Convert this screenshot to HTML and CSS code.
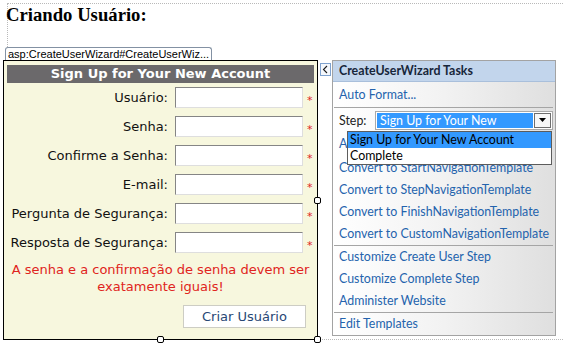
FILE: index.html
```html
<!DOCTYPE html>
<html>
  <head>
    <meta charset="UTF-8">
    <title>Criando Usuário</title>
    <link rel="stylesheet" href="styles.css">
  </head>
  <body>
    <div class="page-head">
      <h3>Criando Usuário:</h3>
    </div>
    <div class="tag-row">
      <span class="tag">asp:CreateUserWizard#CreateUserWiz...</span>
    </div>
    <div class="design">
      <div class="wizard">
        <div class="wz-title">Sign Up for Your New Account</div>
        <div class="field">
          <label for="user">Usuário:</label>
          <input type="text" id="user">
          <span class="req">*</span>
        </div>
        <div class="field">
          <label for="pass">Senha:</label>
          <input type="text" id="pass">
          <span class="req">*</span>
        </div>
        <div class="field">
          <label for="pass2">Confirme a Senha:</label>
          <input type="text" id="pass2">
          <span class="req">*</span>
        </div>
        <div class="field">
          <label for="email">E-mail:</label>
          <input type="text" id="email">
          <span class="req">*</span>
        </div>
        <div class="field">
          <label for="question">Pergunta de Segurança:</label>
          <input type="text" id="question">
          <span class="req">*</span>
        </div>
        <div class="field">
          <label for="answer">Resposta de Segurança:</label>
          <input type="text" id="answer">
          <span class="req">*</span>
        </div>
        <p class="fail">A senha e a confirmação de senha devem ser<br>exatamente iguais!</p>
        <button class="create">Criar Usuário</button>

        <span class="handle h-right"></span>
        <span class="handle h-bottom"></span>
        <span class="handle h-corner"></span>
      </div>

      <div class="side">
        <div class="tag-btn">
          <svg width="9" height="11" viewBox="0 0 9 11">
            <polyline points="6,2 2.5,5.5 6,9" fill="none" stroke="#1c1c1c" stroke-width="1.1"/>
          </svg>
        </div>
        <div class="tasks">
          <div class="tasks-title">CreateUserWizard Tasks</div>
          <a class="task first" href="#">Auto Format...</a>
          <div class="sep"></div>
          <div class="group">
            <div class="step">
              <span class="step-label">Step:</span>
              <div class="select">
                <span class="val">Sign Up for Your New</span>
                <span class="arrow">
                  <svg width="7" height="4" viewBox="0 0 7 4"><polygon points="0,0 7,0 3.5,4" fill="#000"/></svg>
                </span>
              </div>
            </div>
            <a class="task tall" href="#">Add/Remove WizardSteps...</a>
            <a class="task" href="#">Convert to StartNavigationTemplate</a>
            <a class="task" href="#">Convert to StepNavigationTemplate</a>
            <a class="task" href="#">Convert to FinishNavigationTemplate</a>
            <a class="task" href="#">Convert to CustomNavigationTemplate</a>
          </div>
          <div class="sep"></div>
          <a class="task" href="#">Customize Create User Step</a>
          <a class="task" href="#">Customize Complete Step</a>
          <a class="task" href="#">Administer Website</a>
          <div class="sep"></div>
          <a class="task" href="#">Edit Templates</a>

          <div class="list">
            <div class="on">Sign Up for Your New Account</div>
            <div>Complete</div>
          </div>
        </div>
      </div>
    </div>
  </body>
</html>
```

FILE: styles.css
```css
body {
  margin: 0;
  width: 563px;
  height: 348px;
  overflow: hidden;
  background-color: #fff;
  font-family: "DejaVu Sans", Verdana, sans-serif;
}

.page-head {
  margin: 3px 0 0 7px;
  height: 43px;
  border-top: 1px dotted #b9b9b9;
  border-left: 1px dotted #b9b9b9;
}

h3 {
  margin: 0 0 0 -2px;
  font: bold 18.7px/21px "Liberation Serif", serif;
  color: #000;
}

.tag-row {
  height: 13px;
  padding-left: 5px;
}

.tag {
  display: inline-block;
  vertical-align: top;
  height: 12px;
  padding: 0 2px;
  border: 1px solid #8391a3;
  border-bottom: 0;
  border-radius: 3px 3px 0 0;
  font: 11px/12px "Liberation Sans", Arial, sans-serif;
  color: #000;
}

.design {
  display: flex;
  height: 280px;
}

/* the wizard control */

.wizard {
  position: relative;
  margin-left: 3px;
  width: 307px;
  padding: 4px 3px 0;
  border: 1px solid #000;
  background-color: #f7f7de;
}

.wz-title {
  height: 18px;
  line-height: 18px;
  background-color: #6b696b;
  color: #fff;
  font-size: 13px;
  font-weight: bold;
  text-align: center;
}

.field {
  display: flex;
  align-items: center;
  height: 29px;
}

.field label {
  width: 161px;
  text-align: right;
  font-size: 13px;
  color: #111;
}

.field input {
  box-sizing: border-box;
  margin: 0 0 0 7px;
  padding: 0;
  width: 128px;
  height: 21px;
  border: 1px solid;
  border-color: #858585 #dedede #dedede #858585;
  background-color: #fff;
}

.req {
  margin-left: 4px;
  padding-top: 6px;
  font-size: 11px;
  color: #e02424;
}

.fail {
  margin: 0;
  padding-top: 4px;
  font-size: 13px;
  line-height: 17px;
  text-align: center;
  white-space: nowrap;
  color: #e02420;
}

.create {
  display: block;
  margin: 10px 8px 0 auto;
  width: 123px;
  height: 23px;
  padding: 0;
  border: 1px solid #cdcdc4;
  background-color: #fff;
  font-family: "DejaVu Sans", Verdana, sans-serif;
  font-size: 13px;
  color: #284775;
}

.handle {
  position: absolute;
  z-index: 2;
  width: 5px;
  height: 5px;
  border: 1px solid #000;
  border-radius: 2px;
  background-color: #fff;
}

.h-right {
  left: 310px;
  top: 136px;
}

.h-bottom {
  left: 153px;
  top: 275px;
}

.h-corner {
  left: 310px;
  top: 275px;
}

/* smart tag panel */

.side {
  flex: 1;
  display: flex;
  align-items: flex-start;
  border-bottom: 1px dotted #b9b9b9;
}

.tag-btn {
  display: flex;
  align-items: center;
  justify-content: center;
  margin: 3px 0 0 2px;
  width: 9px;
  height: 11px;
  border: 1px solid #7fa2cf;
  background-color: #f5f8fc;
}

.tag-btn svg {
  display: block;
}

.tasks {
  position: relative;
  margin-left: 1px;
  width: 222px;
  height: 274px;
  border: 1px solid #a3a3a3;
  background: linear-gradient(to right, #ffffff 0%, #f2f2f2 50%, #dfdfdf 100%);
  font-family: Lato, "Noto Sans", sans-serif;
  font-size: 12.4px;
}

.tasks-title {
  height: 20px;
  line-height: 20px;
  padding-left: 6px;
  border-bottom: 1px solid #a9bfdb;
  background-color: #c2d5ec;
  font-weight: bold;
  color: #17263a;
}

.task {
  display: block;
  height: 22px;
  line-height: 22px;
  padding-left: 6px;
  white-space: nowrap;
  text-decoration: none;
  color: #2463ad;
}

.task.first {
  height: 25px;
  line-height: 25px;
}

.task.tall {
  height: 25px;
  line-height: 24px;
}

.sep {
  margin: 0 2px 0 1px;
  border-top: 1px solid #a5a5a5;
}

.step {
  display: flex;
  align-items: center;
  height: 24px;
  padding-left: 6px;
  color: #222;
}

.step-label {
  width: 36px;
}

.select {
  display: flex;
  box-sizing: border-box;
  width: 178px;
  height: 19px;
  padding: 1px;
  border: 1px solid #a8a8a8;
  background-color: #fff;
}

.val {
  flex: 1;
  padding-left: 3px;
  line-height: 15px;
  background-color: #3399ff;
  color: #fff;
}

.arrow {
  display: flex;
  align-items: center;
  justify-content: center;
  box-sizing: border-box;
  width: 17px;
  margin-left: 1px;
  border: 1px solid #6e6e6e;
  background-color: #f7f7f7;
}

.arrow svg {
  display: block;
}

.list {
  position: absolute;
  left: 14px;
  top: 70px;
  width: 203px;
  border: 1px solid #5c5c5c;
  background-color: #fff;
}

.list div {
  height: 16px;
  line-height: 16px;
  padding-left: 2px;
  color: #000;
}

.list .on {
  background-color: #3399ff;
}
```
